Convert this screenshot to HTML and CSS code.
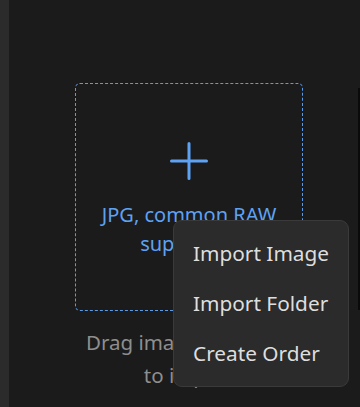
FILE: index.html
```html
<!DOCTYPE html>
<html lang="en">
<head>
    <meta charset="UTF-8">
    <title>Import</title>
    <link rel="stylesheet" href="styles.css">
</head>
<body>

    <div class="app">
        <aside class="sidebar"></aside>

        <main class="workspace">
            <div class="dropzone">
                <svg class="plus" width="38" height="38" viewBox="0 0 38 38">
                    <path d="M19 1.5V36.5M1.5 19H36.5" stroke="currentColor" stroke-width="3" stroke-linecap="round" fill="none"/>
                </svg>
                <p class="formats">JPG, common RAW<br>supported</p>
            </div>
            <p class="hint">Drag image files here<br>to import</p>
        </main>

        <div class="next-panel"></div>
    </div>

    <ul class="context-menu">
        <li>Import Image</li>
        <li>Import Folder</li>
        <li>Create Order</li>
    </ul>

</body>
</html>
```

FILE: styles.css
```css
body {
    margin: 0;
    background: #1b1b1b;
    font-family: "Noto Sans", "Open Sans", sans-serif;
    overflow: hidden;
    height: 100vh;
}

.app {
    display: flex;
    height: 100%;
}

.sidebar {
    width: 9px;
    flex-shrink: 0;
    background: #2b2b2b;
}

.workspace {
    flex: 1;
    display: flex;
    flex-direction: column;
    align-items: center;
    padding: 83px 0 0 11px;
}

.dropzone {
    box-sizing: border-box;
    width: 228px;
    height: 228px;
    border: 1px dashed #5a9ae6;
    border-radius: 5px;
    display: flex;
    flex-direction: column;
    align-items: center;
    padding-top: 58px;
    color: #5ea2f4;
}

.plus {
    display: block;
}

.formats {
    margin: 20px 0 0;
    font-size: 20px;
    line-height: 29px;
    text-align: center;
}

.hint {
    margin: 15px 0 0;
    font-size: 20.5px;
    line-height: 33px;
    color: #8e8e8e;
    text-align: center;
}

.next-panel {
    width: 2px;
    height: 222px;
    margin-top: 88px;
    background: #0a0a0a;
}

.context-menu {
    position: absolute;
    left: 173px;
    top: 220px;
    box-sizing: border-box;
    width: 176px;
    height: 167px;
    margin: 0;
    padding: 7px 0 11px;
    list-style: none;
    background: #2b2b2b;
    border: 1px solid #3a3a3a;
    border-radius: 9px;
}

.context-menu li {
    height: 50px;
    line-height: 50px;
    padding-left: 19px;
    font-size: 20.8px;
    color: #dedede;
}
```
